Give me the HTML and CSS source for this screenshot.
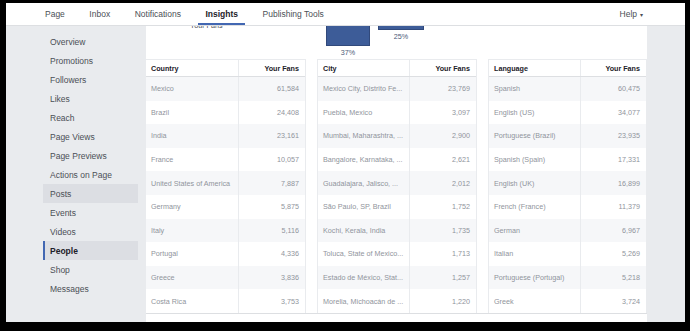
FILE: index.html
```html
<!doctype html>
<html>
<head>
<meta charset="utf-8">
<title>Insights - People</title>
<link rel="stylesheet" href="styles.css">
</head>

<body>
<div class="page">
	<div class="top_nav">
		<a href="javascript:;" class="nav_a">Page</a>
		<a href="javascript:;" class="nav_a">Inbox</a>
		<a href="javascript:;" class="nav_a">Notifications</a>
		<a href="javascript:;" class="nav_a active">Insights</a>
		<a href="javascript:;" class="nav_a">Publishing Tools</a>
		<a href="javascript:;" class="nav_a help">Help <span class="caret">&#9662;</span></a>
	</div>
	<div class="main">
		<ul class="side">
			<li><a href="javascript:;">Overview</a></li>
			<li><a href="javascript:;">Promotions</a></li>
			<li><a href="javascript:;">Followers</a></li>
			<li><a href="javascript:;">Likes</a></li>
			<li><a href="javascript:;">Reach</a></li>
			<li><a href="javascript:;">Page Views</a></li>
			<li><a href="javascript:;">Page Previews</a></li>
			<li><a href="javascript:;">Actions on Page</a></li>
			<li class="hover"><a href="javascript:;">Posts</a></li>
			<li><a href="javascript:;">Events</a></li>
			<li><a href="javascript:;">Videos</a></li>
			<li class="on"><a href="javascript:;">People</a></li>
			<li><a href="javascript:;">Shop</a></li>
			<li><a href="javascript:;">Messages</a></li>
		</ul>
		<div class="panel">
			<div class="chart">
				<div class="chart_label">Your Fans</div>
				<div class="bar_col col1">
					<div class="bar" style="height:20px"></div>
					<div class="pct">37%</div>
				</div>
				<div class="bar_col col2">
					<div class="bar" style="height:3.5px"></div>
					<div class="pct">25%</div>
				</div>
			</div>
			<div class="tables">
				<div class="tbl">
					<div class="row head"><span class="c1">Country</span><span class="c2">Your Fans</span></div>
					<div class="row"><span class="c1">Mexico</span><span class="c2">61,584</span></div>
					<div class="row"><span class="c1">Brazil</span><span class="c2">24,408</span></div>
					<div class="row"><span class="c1">India</span><span class="c2">23,161</span></div>
					<div class="row"><span class="c1">France</span><span class="c2">10,057</span></div>
					<div class="row"><span class="c1">United States of America</span><span class="c2">7,887</span></div>
					<div class="row"><span class="c1">Germany</span><span class="c2">5,875</span></div>
					<div class="row"><span class="c1">Italy</span><span class="c2">5,116</span></div>
					<div class="row"><span class="c1">Portugal</span><span class="c2">4,336</span></div>
					<div class="row"><span class="c1">Greece</span><span class="c2">3,836</span></div>
					<div class="row"><span class="c1">Costa Rica</span><span class="c2">3,753</span></div>
				</div>
				<div class="tbl">
					<div class="row head"><span class="c1">City</span><span class="c2">Your Fans</span></div>
					<div class="row"><span class="c1">Mexico City, Distrito Fe...</span><span class="c2">23,769</span></div>
					<div class="row"><span class="c1">Puebla, Mexico</span><span class="c2">3,097</span></div>
					<div class="row"><span class="c1">Mumbai, Maharashtra, ...</span><span class="c2">2,900</span></div>
					<div class="row"><span class="c1">Bangalore, Karnataka, ...</span><span class="c2">2,621</span></div>
					<div class="row"><span class="c1">Guadalajara, Jalisco, ...</span><span class="c2">2,012</span></div>
					<div class="row"><span class="c1">São Paulo, SP, Brazil</span><span class="c2">1,752</span></div>
					<div class="row"><span class="c1">Kochi, Kerala, India</span><span class="c2">1,735</span></div>
					<div class="row"><span class="c1">Toluca, State of Mexico...</span><span class="c2">1,713</span></div>
					<div class="row"><span class="c1">Estado de México, Stat...</span><span class="c2">1,257</span></div>
					<div class="row"><span class="c1">Morelia, Michoacán de ...</span><span class="c2">1,220</span></div>
				</div>
				<div class="tbl last">
					<div class="row head"><span class="c1">Language</span><span class="c2">Your Fans</span></div>
					<div class="row"><span class="c1">Spanish</span><span class="c2">60,475</span></div>
					<div class="row"><span class="c1">English (US)</span><span class="c2">34,077</span></div>
					<div class="row"><span class="c1">Portuguese (Brazil)</span><span class="c2">23,935</span></div>
					<div class="row"><span class="c1">Spanish (Spain)</span><span class="c2">17,331</span></div>
					<div class="row"><span class="c1">English (UK)</span><span class="c2">16,899</span></div>
					<div class="row"><span class="c1">French (France)</span><span class="c2">11,379</span></div>
					<div class="row"><span class="c1">German</span><span class="c2">6,967</span></div>
					<div class="row"><span class="c1">Italian</span><span class="c2">5,269</span></div>
					<div class="row"><span class="c1">Portuguese (Portugal)</span><span class="c2">5,218</span></div>
					<div class="row"><span class="c1">Greek</span><span class="c2">3,724</span></div>
				</div>
			</div>
			<div class="panel_foot"></div>
		</div>
		<div class="right_col"></div>
	</div>
</div>
</body>
</html>
```

FILE: styles.css
```css
*{margin:0; padding:0; box-sizing:border-box;}
html,body{background:#000; height:100%;}
body{font-family:"Liberation Sans", Arial, sans-serif; overflow:hidden;}
a{text-decoration:none;}
ul{list-style:none;}
.page{width:679px; height:319px; margin:3px 0 0 6px; background:#e9ebee; display:flex; flex-direction:column; overflow:hidden;}

.top_nav{height:23px; background:#fff; border-bottom:1px solid #dddfe2; display:flex; align-items:stretch; padding-left:32px; padding-right:42px;}
.nav_a{font-size:8.5px; color:#4b4f56; padding:0 7px; margin-right:10.5px; display:flex; align-items:center; border-bottom:2.5px solid transparent; padding-top:2px;}
.nav_a.active{color:#1d2129; font-weight:bold; border-bottom-color:#4267b2;}
.nav_a.help{margin-left:auto; margin-right:0; padding:2px 0 0;}
.caret{font-size:6px; margin-left:3px;}

.main{flex:1; display:flex; min-height:0;}
.side{width:140px; padding:6px 0 0 37px;}
.side li{height:19px; width:95px;}
.side a{display:flex; align-items:center; height:100%; padding-left:7px; font-size:8.5px; color:#4b4f56;}
.side li.hover{background:#dcdee3;}
.side li.on{background:#dcdee3; border-left:2px solid #4267b2;}
.side li.on a{color:#1d2129; font-weight:bold; padding-left:5px;}

.panel{width:501px; background:#fff; display:flex; flex-direction:column;}
.right_col{flex:1;}

.chart{height:33px; overflow:hidden; display:flex; align-items:flex-start; padding-left:44px;}
.chart_label{width:136px; font-size:7.2px; color:#4b4f56; margin-top:-5px;}
.bar_col{display:flex; flex-direction:column; align-items:center;}
.col1{width:44px;}
.col2{width:46px; margin-left:8px;}
.bar{width:100%; background:#3d5c98; border:1px solid #31497b; border-top:0;}
.pct{font-size:7.2px; color:#4b5a78; margin-top:2px;}

.tables{display:flex; gap:11px;}
.tbl{width:160px; border-right:1px solid #e9ebee;}
.tbl + .tbl{border-left:1px solid #e9ebee;}
.tbl.last{width:159px;}
.row{display:flex; height:23.6px; font-size:7.2px; color:#90949c;}
.row:nth-child(even){background:#f6f7f9;}
.row.head{height:18px; border-top:1px solid #e9ebee; border-bottom:1px solid #dddfe2; color:#1d2129; font-weight:bold;}
.c1{width:93px; flex-shrink:0; padding-left:5px; border-right:1px solid #e9ebee; display:flex; align-items:center; white-space:nowrap; overflow:hidden;}
.tbl + .tbl .c1{width:92px;}
.c2{flex:1; padding-right:6px; display:flex; align-items:center; justify-content:flex-end;}

.panel_foot{flex:1; border-top:1px solid #dddfe2; background:#fff;}
```
